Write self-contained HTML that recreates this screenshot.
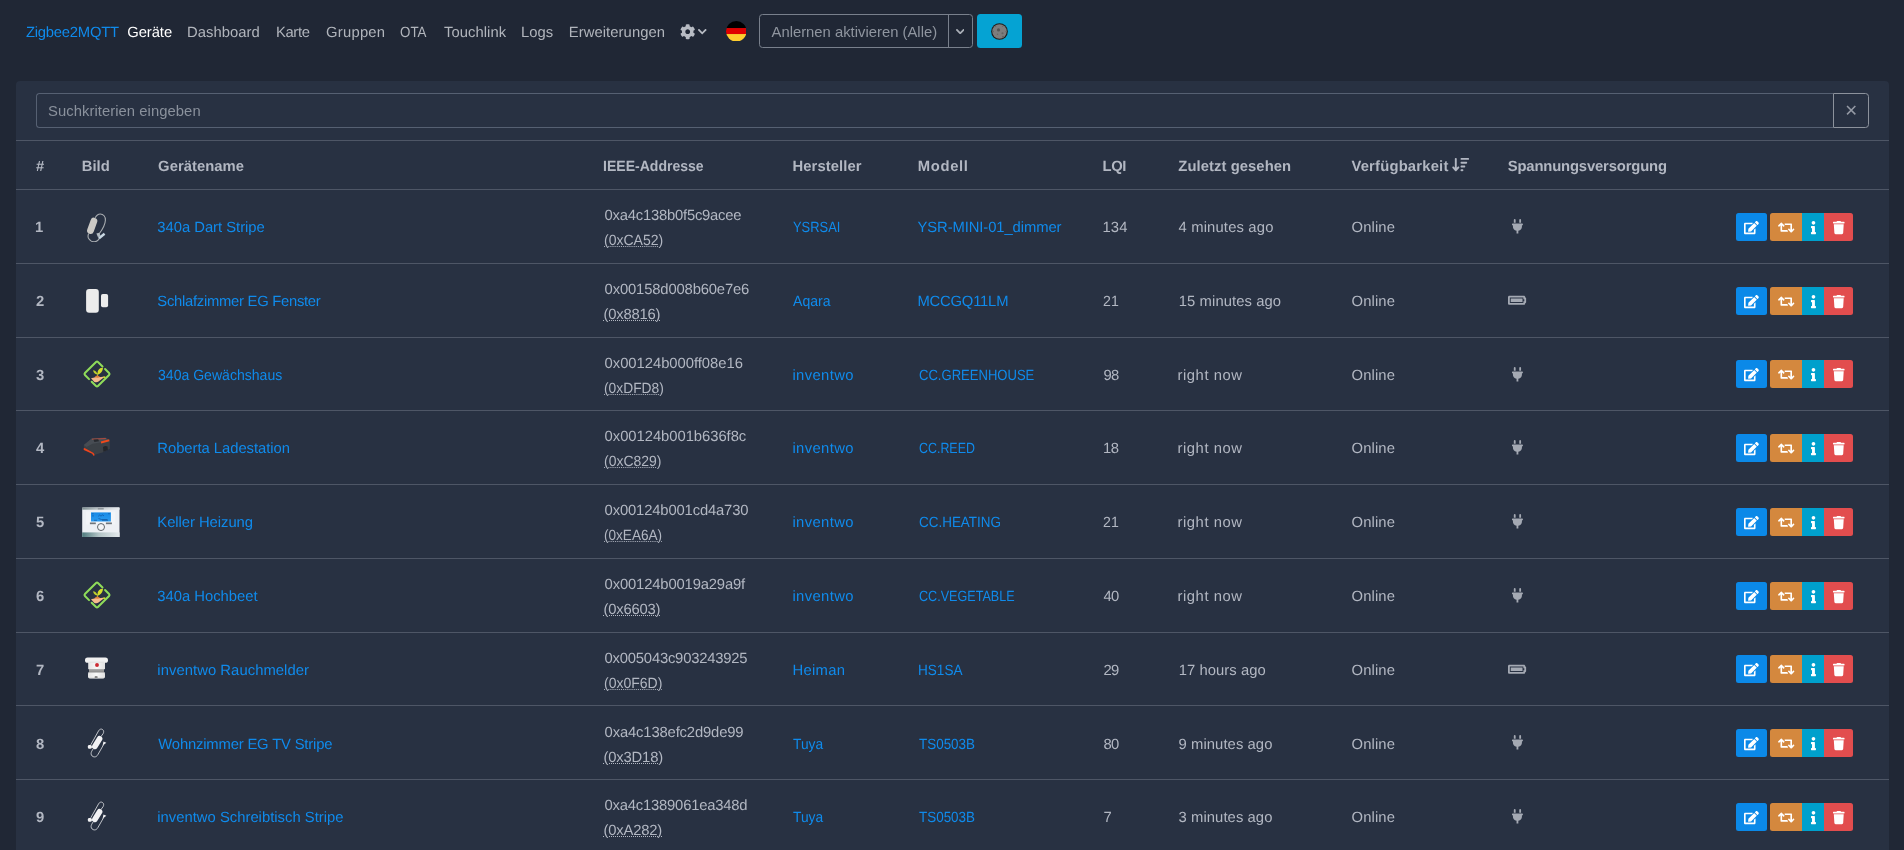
<!DOCTYPE html>
<html lang="de">
<head>
<meta charset="utf-8">
<title>Zigbee2MQTT</title>
<meta name="viewport" content="width=device-width, initial-scale=1">
<style>
*{box-sizing:border-box}
html,body{margin:0;padding:0}
body{width:1904px;height:850px;overflow:hidden;background:#202735;color:#b2b7c2;font-family:"Liberation Sans",Arial,sans-serif;font-size:14.8px;line-height:21.6px;text-rendering:geometricPrecision}
a{text-decoration:none;color:inherit}
ul{list-style:none;margin:0;padding:0}
button{font:inherit;margin:0;padding:0;border:0;background:none;color:inherit;cursor:pointer}
.fa{display:inline-block;height:1em;width:auto;vertical-align:-.125em;overflow:visible}

/* ---------- navbar ---------- */
.navbar{will-change:transform;position:absolute;left:0;top:0;width:1904px;height:62px;display:flex;align-items:center;padding-left:26px}
.brand{display:block;color:#0f8bec;width:101.600px;white-space:nowrap;position:relative;top:3px}
.nav{display:flex;align-items:center}
.nav li{flex:none}
.nl{display:block;color:#b1b5bc;padding:7px 0;white-space:nowrap;position:relative;top:3px}
.nl.active{color:#fff}
.w-geraete{width:60.400px}.w-dash{width:88.500px}.w-karte{width:50px}.w-grp{width:74.100px}.w-ota{width:42.900px}.w-touch{width:78.500px}.w-logs{width:47.400px}.w-erw{width:110.600px}.w-cog{width:45.900px}.w-flag{width:33.100px}
.n-cog{display:flex;align-items:center;color:#b8bcc4;top:.5px}
.cog{height:15.400px;width:15.400px}
.chev{width:8.400px;height:5.500px;margin-left:2.800px;margin-top:1px}
.n-flag{padding:0;display:flex;top:0}
.flag{width:20.600px;height:20.600px;display:block}
.join{display:flex;flex:none;width:214px;height:34px;border:1px solid #79808c;border-radius:3.500px;color:#8f959f}
.join-main{padding:0 0 0 11.300px;border-right:1px solid #79808c;width:188.700px;text-align:left;white-space:nowrap;position:relative}
.join-main .t{position:relative;top:2px}
.join-dd{flex:1;display:flex;align-items:center;justify-content:center;color:#a9aeb6}
.chev2{width:8.400px;height:5.500px;margin-top:1px}
.moon{flex:none;margin-left:4px;width:45px;height:34px;border-radius:3.500px;background:#05a3d3;display:flex;align-items:center;justify-content:center}
.moon svg{width:17px;height:17px;margin-top:1px}

/* ---------- card ---------- */
.card{will-change:transform;position:absolute;left:16px;top:81px;width:1873px;height:800px;background:#283142;border-radius:4px 4px 0 0}
.search{position:absolute;left:20px;top:12px;width:1833px;height:35px;display:flex}
.q{flex:1;height:35px;border:1px solid #566072;border-right:0;border-radius:3.500px 0 0 3.500px;background:transparent;color:#b2b7c2;font:inherit;padding:0 11px;outline:0;min-width:0}
.q::placeholder{color:#8a919c;opacity:1;letter-spacing:.06px}
.clr{width:36px;height:35px;border:1px solid #8c929c;border-radius:0 3.500px 3.500px 0;color:#959aa5;display:flex;align-items:center;justify-content:center}
.clr svg{width:10.400px;height:10.400px}

.tbl{position:absolute;left:0;top:59px;width:1873px;table-layout:fixed;border-collapse:collapse;border-spacing:0}
.tbl th,.tbl td{padding:2px 0 0 20px;text-align:left;vertical-align:middle;border-bottom:1px solid #4e5666;white-space:nowrap}
.tbl thead tr{height:49px}
.tbl th{border-top:1px solid #4e5666;font-weight:700;color:#b2b7c2;padding-top:5.200px}
.lnk{color:#0f8bec}
.tbl td .t{position:relative;top:1px}
.tbl tr.lo td .t{top:2px}
.tbl tr.lo .pic{top:0}
.c-num b{font-weight:700}
.pic{display:flex;align-items:center;margin-top:-2px;height:30px;position:relative;top:-.5px}
.pic-dart{top:.2px}.pic-thermo{top:.2px}
.pic svg{display:block;flex:none}
.ieee{line-height:25px}
.nwk{line-height:25px}
abbr{text-decoration:underline dotted #b2b7c2 1px;text-underline-offset:.8px;cursor:help}
.sorti{height:15.200px;margin-left:3.800px;position:relative;top:-.1px}
.pw-plug{height:14.500px;margin-left:4px;color:#a4a9b3;position:relative;top:1px}
.pw-bat{height:14.500px;color:#a4a9b3;position:relative;top:1px}
.acts{display:flex;align-items:center;height:28px;margin-top:-2px}
.btn{height:28px;color:#fff;display:flex;align-items:center;justify-content:center}
.btn .fa{height:13.200px;position:relative;top:.7px}
.b-edit{width:31px;background:#0b89e8;border-radius:2.500px;margin-right:3px}
.grp{display:flex}
.b-warn{width:32px;background:#d4883e;border-radius:2.500px 0 0 2.500px}
.b-info{width:22px;background:#00a0cc}
.b-del{width:29px;background:#e24d4e;border-radius:0 2.500px 2.500px 0}

</style>
</head>
<body>
<nav class="navbar">
<a class="brand" href="#"><span class="t" style="letter-spacing:-0.23px">Zigbee2MQTT</span></a>
<ul class="nav">
<li class="w-geraete"><a class="nl active n-geraete" href="#"><span class="t" style="letter-spacing:-0.06px;margin-left:-0.4px">Geräte</span></a></li>
<li class="w-dash"><a class="nl n-dash" href="#"><span class="t" style="letter-spacing:0.03px;margin-left:-1.0px">Dashboard</span></a></li>
<li class="w-karte"><a class="nl n-karte" href="#"><span class="t" style="letter-spacing:-0.37px;margin-left:-0.5px">Karte</span></a></li>
<li class="w-grp"><a class="nl n-grp" href="#"><span class="t" style="letter-spacing:0.25px;margin-left:-0.5px">Gruppen</span></a></li>
<li class="w-ota"><a class="nl n-ota" href="#"><span class="t" style="margin-left:-0.4px;display:inline-block;transform-origin:0 50%;transform:scaleX(0.903)">OTA</span></a></li>
<li class="w-touch"><a class="nl n-touch" href="#"><span class="t" style="letter-spacing:0.06px;margin-left:0.5px">Touchlink</span></a></li>
<li class="w-logs"><a class="nl n-logs" href="#"><span class="t" style="margin-left:-1.0px">Logs</span></a></li>
<li class="w-erw"><a class="nl n-erw" href="#"><span class="t" style="letter-spacing:0.07px;margin-left:-0.6px">Erweiterungen</span></a></li>
<li class="w-cog"><a class="nl n-cog" href="#"><svg class="fa cog" viewBox="0 0 512 512" aria-hidden="true"><path fill="currentColor" d="M487.4 315.7l-42.6-24.6c4.3-23.2 4.3-47 0-70.2l42.6-24.6c4.9-2.8 7.1-8.6 5.500-14-11.100-35.600-30-67.800-54.700-94.600-3.800-4.100-10-5.100-14.800-2.300L380.800 110c-17.900-15.400-38.500-27.300-60.800-35.100V25.800c0-5.600-3.900-10.500-9.400-11.700-36.700-8.200-74.300-7.800-109.200 0-5.500 1.200-9.400 6.100-9.400 11.700V75c-22.200 7.900-42.800 19.800-60.800 35.100L88.700 85.500c-4.900-2.800-11-1.900-14.800 2.300-24.700 26.700-43.600 58.900-54.700 94.600-1.700 5.400.6 11.200 5.500 14L67.300 221c-4.300 23.200-4.300 47 0 70.200l-42.600 24.600c-4.900 2.800-7.100 8.600-5.500 14 11.100 35.600 30 67.800 54.700 94.600 3.800 4.100 10 5.100 14.800 2.300l42.600-24.600c17.900 15.400 38.500 27.300 60.800 35.100v49.200c0 5.600 3.900 10.500 9.400 11.700 36.700 8.200 74.300 7.800 109.200 0 5.500-1.200 9.400-6.100 9.400-11.700v-49.200c22.200-7.900 42.800-19.800 60.800-35.100l42.600 24.600c4.900 2.800 11 1.900 14.800-2.300 24.700-26.700 43.600-58.900 54.700-94.600 1.500-5.500-.7-11.300-5.600-14.100zM256 336c-44.100 0-80-35.900-80-80s35.900-80 80-80 80 35.900 80 80-35.900 80-80 80z"/></svg><svg class="chev" viewBox="0 0 8.400 5.500" aria-hidden="true"><path d="M.9 1l3.300 3.300 3.300-3.300" fill="none" stroke="currentColor" stroke-width="1.800" stroke-linecap="square" stroke-linejoin="miter"/></svg></a></li>
<li class="w-flag"><a class="nl n-flag" href="#"><svg class="flag" viewBox="0 0 21 21" aria-hidden="true"><defs><clipPath id="fc"><circle cx="10.5" cy="10.500" r="10.500"/></clipPath></defs><g clip-path="url(#fc)"><rect width="21" height="7.2" fill="#000"/><rect y="7.2" width="21" height="6.100" fill="#e00000"/><rect y="13.300" width="21" height="7.700" fill="#ffcd2e"/></g></svg></a></li>
</ul>
<div class="join">
<button class="join-main" type="button"><span class="t" style="letter-spacing:0.01px;margin-left:0.3px">Anlernen aktivieren (Alle)</span></button><button class="join-dd" type="button"><svg class="chev2" viewBox="0 0 8.400 5.500" aria-hidden="true"><path d="M.9 1l3.300 3.300 3.300-3.300" fill="none" stroke="currentColor" stroke-width="1.800" stroke-linecap="square" stroke-linejoin="miter"/></svg></button>
</div>
<button class="moon" type="button"><svg viewBox="-8.500 -8.500 17 17" aria-hidden="true"><circle r="8.350" fill="#211c1a"/><circle r="7.250" fill="#7d7d7d"/><g fill="#555"><circle cx="-1" cy="-1.600" r="1.550"/><circle cx="3" cy="1.800" r="1.050" fill="#626262"/><circle cx="-2" cy="2.800" r=".75" fill="#666"/><circle cx="3.500" cy="5.300" r="1" fill="#606060"/><circle cx="-6.300" cy=".1" r=".8" fill="#666"/><circle cx="-3.900" cy="-5.100" r=".7" fill="#6a6a6a"/><circle cx="3.100" cy="-5.100" r=".7" fill="#6a6a6a"/><circle cx="6.400" cy=".1" r=".7" fill="#6a6a6a"/></g></svg></button>
</nav>
<main class="card">
<div class="search">
<input class="q" type="text" placeholder="Suchkriterien eingeben"><button class="clr" type="button"><svg viewBox="0 0 10 10" aria-hidden="true"><path d="M1 1l8 8M9 1l-8 8" stroke="currentColor" stroke-width="1.450" fill="none"/></svg></button>
</div>
<table class="tbl">
<colgroup><col style="width:46px"><col style="width:76px"><col style="width:446px"><col style="width:189px"><col style="width:125px"><col style="width:185px"><col style="width:75px"><col style="width:173px"><col style="width:157px"><col style="width:228px"><col style="width:173px"></colgroup>
<thead>
<tr>
<th><span class="t" style="margin-left:0.1px">#</span></th><th><span class="t" style="letter-spacing:0.03px;margin-left:-0.3px">Bild</span></th><th><span class="t" style="letter-spacing:0.03px;margin-left:0.1px">Gerätename</span></th><th><span class="t" style="margin-left:-0.8px;display:inline-block;transform-origin:0 50%;transform:scaleX(0.949)">IEEE-Addresse</span></th><th><span class="t" style="letter-spacing:0.10px;margin-left:-0.6px">Hersteller</span></th><th><span class="t" style="letter-spacing:0.64px;margin-left:-0.2px">Modell</span></th><th><span class="t" style="letter-spacing:-0.30px;margin-left:-0.6px">LQI</span></th><th><span class="t" style="letter-spacing:0.07px;margin-left:0.3px">Zuletzt gesehen</span></th><th><span class="t" style="letter-spacing:0.20px;margin-left:0.4px">Verfügbarkeit</span><svg class="fa sorti" viewBox="0 0 576 512" aria-hidden="true"><path fill="currentColor" d="M151.6 469.6C145.5 476.2 137 480 128 480s-17.5-3.8-23.6-10.4l-88-96c-11.900-13-11.100-33.300 2-45.200s33.300-11.100 45.200 2L96 365.700V64c0-17.700 14.300-32 32-32s32 14.300 32 32V365.700l32.400-35.400c11.900-13 32.200-13.900 45.200-2s13.900 32.200 2 45.200l-88 96zM320 480c-17.700 0-32-14.300-32-32s14.300-32 32-32h32c17.700 0 32 14.300 32 32s-14.300 32-32 32H320zm0-128c-17.700 0-32-14.300-32-32s14.300-32 32-32h96c17.700 0 32 14.300 32 32s-14.300 32-32 32H320zm0-128c-17.700 0-32-14.300-32-32s14.300-32 32-32H480c17.700 0 32 14.300 32 32s-14.300 32-32 32H320zm0-128c-17.700 0-32-14.300-32-32s14.300-32 32-32H544c17.700 0 32 14.300 32 32s-14.300 32-32 32H320z"/></svg></th><th><span class="t" style="letter-spacing:-0.15px;margin-left:-0.3px">Spannungsversorgung</span></th><th></th>
</tr>
</thead>
<tbody>
<tr style="height:74px">
<td class="c-num"><b class="t" style="margin-left:-1.0px">1</b></td>
<td class="c-img"><div class="pic pic-dart"><svg viewBox="0 0 30 30" width="30" height="30" aria-hidden="true"><path d="M13.200 5.800C14.500 3.300 16.300 2 18.200 2c3.200 0 5.400 2.600 5.200 6.200-.1 2.300-.8 4.200-1.700 6.200-1 2.200-2.600 4.800-4.700 7.600" fill="none" stroke="#a9adb1" stroke-width="1.100"/><path d="M6.700 21.500c-.9 2-.9 3.800.1 5.300 1.200 1.900 3.200 3 5.300 3 1.700 0 3.200-.7 4.200-1.900.6-.7.900-1.400 1-2.300" fill="none" stroke="#a9adb1" stroke-width="1.100"/><rect x="-3.400" y="-8.400" width="6.800" height="16.800" rx="3.400" transform="translate(10.200 13.800) rotate(20)" fill="#cbc9c5"/><path d="M14.400 21.600l2.800-.9 1.300 2.700-2.500 1.800z" fill="#b4bcc2"/><path d="M16.200 25.200l5.600-4.400 1.500 1.900-5.500 4.500z" fill="#c9d8e3"/></svg></div></td>
<td class="c-name"><a class="lnk t" href="#" style="letter-spacing:-0.02px;margin-left:-0.7px">340a Dart Stripe</a></td>
<td class="c-ieee"><div class="ieee"><span class="t" style="letter-spacing:-0.22px;margin-left:0.6px">0xa4c138b0f5c9acee</span></div><div class="nwk"><abbr class="t" title="Netzwerkadresse" style="margin-left:0.4px;display:inline-block;transform-origin:0 50%;transform:scaleX(0.948)">(0xCA52)</abbr></div></td>
<td class="c-vendor"><a class="lnk t" href="#" style="margin-left:0.4px;display:inline-block;transform-origin:0 50%;transform:scaleX(0.872)">YSRSAI</a></td>
<td class="c-model"><a class="lnk t" href="#" style="letter-spacing:-0.09px;margin-left:-0.5px">YSR-MINI-01_dimmer</a></td>
<td class="c-lqi"><span class="t" style="letter-spacing:0.20px;margin-left:-0.6px">134</span></td>
<td class="c-seen"><span class="t" style="letter-spacing:0.16px;margin-left:0.5px">4 minutes ago</span></td>
<td class="c-avail"><span class="t" style="letter-spacing:0.12px;margin-left:0.5px">Online</span></td>
<td class="c-power"><svg class="fa pw-plug" viewBox="0 0 384 512" aria-hidden="true"><path fill="currentColor" d="M320 32a32 32 0 0 0-64 0v96h64zm48 128H16a16 16 0 0 0-16 16v32a16 16 0 0 0 16 16h16v32a160.07 160.07 0 0 0 128 156.8V512h64v-99.2A160.07 160.07 0 0 0 352 256v-32h16a16 16 0 0 0 16-16v-32a16 16 0 0 0-16-16zm-240-128a32 32 0 0 0-64 0v96h64z"/></svg></td>
<td class="c-act"><div class="acts"><button class="btn b-edit" type="button"><svg class="fa " viewBox="0 0 576 512" aria-hidden="true"><path fill="currentColor" d="M402.6 83.2l90.2 90.2c3.8 3.8 3.8 10 0 13.8L274.4 405.6l-92.8 10.3c-12.4 1.4-22.9-9.1-21.5-21.5l10.3-92.8L388.8 83.2c3.8-3.8 10-3.8 13.8 0zm162-22.9l-48.8-48.8c-15.2-15.2-39.9-15.2-55.2 0l-35.4 35.4c-3.8 3.8-3.8 10 0 13.8l90.2 90.2c3.8 3.8 10 3.8 13.8 0l35.4-35.4c15.2-15.3 15.2-40 0-55.2zM384 346.2V448H64V128h229.8c3.2 0 6.2-1.3 8.5-3.5l40-40c7.6-7.6 2.2-20.5-8.5-20.5H48C21.5 64 0 85.5 0 112v352c0 26.5 21.5 48 48 48h352c26.5 0 48-21.5 48-48V306.200c0-10.700-12.900-16-20.500-8.500l-40 40c-2.200 2.300-3.500 5.300-3.500 8.500z"/></svg></button><div class="grp"><button class="btn b-warn" type="button"><svg class="fa " viewBox="0 0 640 512" aria-hidden="true"><path fill="currentColor" d="M629.657 343.598L528.971 444.284c-9.373 9.372-24.568 9.372-33.941 0L394.343 343.598c-9.373-9.373-9.373-24.569 0-33.941l10.823-10.823c9.562-9.562 25.133-9.34 34.419.492L480 342.118V160H292.451a24.005 24.005 0 0 1-16.971-7.029l-16-16C244.361 121.851 255.069 96 276.451 96H520c13.255 0 24 10.745 24 24v222.118l40.416-42.792c9.285-9.831 24.856-10.054 34.419-.492l10.823 10.823c9.372 9.372 9.372 24.569-.001 33.941zm-265.138 15.431A23.999 23.999 0 0 0 347.548 352H160V169.881l40.416 42.792c9.286 9.831 24.856 10.054 34.419.491l10.822-10.822c9.373-9.373 9.373-24.569 0-33.941L144.971 67.716c-9.373-9.373-24.569-9.373-33.941 0L10.343 168.402c-9.373 9.373-9.373 24.569 0 33.941l10.822 10.822c9.562 9.562 25.133 9.34 34.419-.491L96 169.881V392c0 13.255 10.745 24 24 24h243.549c21.382 0 32.09-25.851 16.971-40.971l-16.001-16z"/></svg></button><button class="btn b-info" type="button"><svg class="fa " viewBox="0 0 192 512" aria-hidden="true"><path fill="currentColor" d="M20 424.229h20V279.771H20c-11.046 0-20-8.954-20-20V212c0-11.046 8.954-20 20-20h112c11.046 0 20 8.954 20 20v212.229h20c11.046 0 20 8.954 20 20V492c0 11.046-8.954 20-20 20H20c-11.046 0-20-8.954-20-20v-47.771c0-11.046 8.954-20 20-20zM96 0C56.235 0 24 32.235 24 72s32.235 72 72 72 72-32.235 72-72S135.764 0 96 0z"/></svg></button><button class="btn b-del" type="button"><svg class="fa " viewBox="0 0 448 512" aria-hidden="true"><path fill="currentColor" d="M432 32H312l-9.4-18.7A24 24 0 0 0 281.1 0H166.8a23.72 23.72 0 0 0-21.4 13.3L136 32H16A16 16 0 0 0 0 48v32a16 16 0 0 0 16 16h416a16 16 0 0 0 16-16V48a16 16 0 0 0-16-16zM53.2 467a48 48 0 0 0 47.9 45h245.8a48 48 0 0 0 47.9-45L416 128H32z"/></svg></button></div></div></td>
</tr>
<tr style="height:74px">
<td class="c-num"><b class="t">2</b></td>
<td class="c-img"><div class="pic pic-door"><svg viewBox="0 0 30 30" width="30" height="30" aria-hidden="true"><rect x="4.100" y="3.900" width="12.700" height="23.900" rx="3" fill="#ececec"/><rect x="19" y="8.900" width="7.100" height="13.300" rx="1.800" fill="#ececec"/></svg></div></td>
<td class="c-name"><a class="lnk t" href="#" style="letter-spacing:-0.27px;margin-left:-0.7px">Schlafzimmer EG Fenster</a></td>
<td class="c-ieee"><div class="ieee"><span class="t" style="letter-spacing:-0.15px;margin-left:0.6px">0x00158d008b60e7e6</span></div><div class="nwk"><abbr class="t" title="Netzwerkadresse" style="letter-spacing:-0.19px;margin-left:-0.6px">(0x8816)</abbr></div></td>
<td class="c-vendor"><a class="lnk t" href="#" style="margin-left:0.4px;display:inline-block;transform-origin:0 50%;transform:scaleX(0.950)">Aqara</a></td>
<td class="c-model"><a class="lnk t" href="#" style="letter-spacing:-0.21px;margin-left:-0.5px">MCCGQ11LM</a></td>
<td class="c-lqi"><span class="t" style="margin-left:0.4px;display:inline-block;transform-origin:0 50%;transform:scaleX(0.957)">21</span></td>
<td class="c-seen"><span class="t" style="letter-spacing:0.08px;margin-left:0.8px">15 minutes ago</span></td>
<td class="c-avail"><span class="t" style="letter-spacing:0.12px;margin-left:0.5px">Online</span></td>
<td class="c-power"><svg class="fa pw-bat" viewBox="0 0 640 512" aria-hidden="true"><path fill="currentColor" d="M544 160v64h32v64h-32v64H64V160h480m16-64H48c-26.510 0-48 21.490-48 48v224c0 26.510 21.490 48 48 48h512c26.510 0 48-21.490 48-48v-16h8c13.255 0 24-10.745 24-24V184c0-13.255-10.745-24-24-24h-8v-16c0-26.510-21.490-48-48-48zm-48 96H96v128h416V192z"/></svg></td>
<td class="c-act"><div class="acts"><button class="btn b-edit" type="button"><svg class="fa " viewBox="0 0 576 512" aria-hidden="true"><path fill="currentColor" d="M402.6 83.2l90.2 90.2c3.8 3.8 3.8 10 0 13.8L274.4 405.6l-92.8 10.3c-12.4 1.4-22.9-9.1-21.5-21.5l10.3-92.8L388.8 83.2c3.8-3.8 10-3.8 13.8 0zm162-22.9l-48.8-48.8c-15.2-15.2-39.9-15.2-55.2 0l-35.4 35.4c-3.8 3.8-3.8 10 0 13.8l90.2 90.2c3.8 3.8 10 3.8 13.8 0l35.4-35.4c15.2-15.3 15.2-40 0-55.2zM384 346.2V448H64V128h229.8c3.2 0 6.2-1.3 8.5-3.5l40-40c7.6-7.6 2.2-20.5-8.5-20.5H48C21.5 64 0 85.5 0 112v352c0 26.5 21.5 48 48 48h352c26.5 0 48-21.5 48-48V306.200c0-10.700-12.900-16-20.500-8.500l-40 40c-2.200 2.300-3.500 5.300-3.500 8.500z"/></svg></button><div class="grp"><button class="btn b-warn" type="button"><svg class="fa " viewBox="0 0 640 512" aria-hidden="true"><path fill="currentColor" d="M629.657 343.598L528.971 444.284c-9.373 9.372-24.568 9.372-33.941 0L394.343 343.598c-9.373-9.373-9.373-24.569 0-33.941l10.823-10.823c9.562-9.562 25.133-9.34 34.419.492L480 342.118V160H292.451a24.005 24.005 0 0 1-16.971-7.029l-16-16C244.361 121.851 255.069 96 276.451 96H520c13.255 0 24 10.745 24 24v222.118l40.416-42.792c9.285-9.831 24.856-10.054 34.419-.492l10.823 10.823c9.372 9.372 9.372 24.569-.001 33.941zm-265.138 15.431A23.999 23.999 0 0 0 347.548 352H160V169.881l40.416 42.792c9.286 9.831 24.856 10.054 34.419.491l10.822-10.822c9.373-9.373 9.373-24.569 0-33.941L144.971 67.716c-9.373-9.373-24.569-9.373-33.941 0L10.343 168.402c-9.373 9.373-9.373 24.569 0 33.941l10.822 10.822c9.562 9.562 25.133 9.34 34.419-.491L96 169.881V392c0 13.255 10.745 24 24 24h243.549c21.382 0 32.09-25.851 16.971-40.971l-16.001-16z"/></svg></button><button class="btn b-info" type="button"><svg class="fa " viewBox="0 0 192 512" aria-hidden="true"><path fill="currentColor" d="M20 424.229h20V279.771H20c-11.046 0-20-8.954-20-20V212c0-11.046 8.954-20 20-20h112c11.046 0 20 8.954 20 20v212.229h20c11.046 0 20 8.954 20 20V492c0 11.046-8.954 20-20 20H20c-11.046 0-20-8.954-20-20v-47.771c0-11.046 8.954-20 20-20zM96 0C56.235 0 24 32.235 24 72s32.235 72 72 72 72-32.235 72-72S135.764 0 96 0z"/></svg></button><button class="btn b-del" type="button"><svg class="fa " viewBox="0 0 448 512" aria-hidden="true"><path fill="currentColor" d="M432 32H312l-9.4-18.7A24 24 0 0 0 281.1 0H166.8a23.72 23.72 0 0 0-21.4 13.3L136 32H16A16 16 0 0 0 0 48v32a16 16 0 0 0 16 16h416a16 16 0 0 0 16-16V48a16 16 0 0 0-16-16zM53.2 467a48 48 0 0 0 47.9 45h245.8a48 48 0 0 0 47.9-45L416 128H32z"/></svg></button></div></div></td>
</tr>
<tr class="lo" style="height:73px">
<td class="c-num"><b class="t">3</b></td>
<td class="c-img"><div class="pic pic-plant"><svg viewBox="0 0 30 30" width="30" height="30" aria-hidden="true"><g fill="none" stroke="#8fdc5a" stroke-width="1.900" stroke-linecap="round" stroke-linejoin="round" transform="translate(15 15) scale(1.060) translate(-15 -15)"><path d="M7.500 19.800L3.600 15.900a1.300 1.300 0 0 1 0-1.800L14.100 3.600a1.300 1.300 0 0 1 1.800 0l4.300 4.300"/><path d="M22.600 10.300l3.800 3.800a1.300 1.300 0 0 1 0 1.800L15.900 26.400a1.300 1.300 0 0 1-1.800 0L10 22.300"/></g><path d="M15.700 15.800c-.5-2.300 0-4.300 1.500-5.800 1.100-1.100 2.400-1.500 3.800-1.300-.1 2-.8 3.700-2.100 5-1 1-2.100 1.800-3.200 2.100z" fill="#d3dc2b"/><path d="M15.400 15.500c-.2-1.500-.9-2.700-2.100-3.500-.7-.5-1.400-.7-2.200-.8.200 1.500.9 2.700 2 3.500.7.500 1.500.8 2.300.8z" fill="#c0cf2e"/><path d="M15.500 14v3" stroke="#a9bf2c" stroke-width=".9"/><path d="M12 18.600c1-.9 2-1.900 3.400-2.400 1.200.5 2.300 1.300 3.400 2.600l-3 .9z" fill="#e07c3c"/><path d="M9 19.300c2.200-.9 4.300-1.100 6.400-.6l5-1c1.100-.1 1.500.7.700 1.400l-4.600 3.500c-1.200.8-2.600.8-4.100.3z" fill="#f6bb8d"/><ellipse cx="22.200" cy="18.200" rx="1.400" ry="1" fill="#c9d530"/></svg></div></td>
<td class="c-name"><a class="lnk t" href="#" style="margin-left:0.3px;display:inline-block;transform-origin:0 50%;transform:scaleX(0.950)">340a Gewächshaus</a></td>
<td class="c-ieee"><div class="ieee"><span class="t" style="letter-spacing:-0.03px;margin-left:0.6px">0x00124b000ff08e16</span></div><div class="nwk"><abbr class="t" title="Netzwerkadresse" style="margin-left:0.4px;display:inline-block;transform-origin:0 50%;transform:scaleX(0.933)">(0xDFD8)</abbr></div></td>
<td class="c-vendor"><a class="lnk t" href="#" style="letter-spacing:0.38px;margin-left:-0.6px">inventwo</a></td>
<td class="c-model"><a class="lnk t" href="#" style="margin-left:0.5px;display:inline-block;transform-origin:0 50%;transform:scaleX(0.882)">CC.GREENHOUSE</a></td>
<td class="c-lqi"><span class="t" style="letter-spacing:-0.60px;margin-left:0.4px">98</span></td>
<td class="c-seen"><span class="t" style="letter-spacing:0.56px;margin-left:-0.5px">right now</span></td>
<td class="c-avail"><span class="t" style="letter-spacing:0.12px;margin-left:0.5px">Online</span></td>
<td class="c-power"><svg class="fa pw-plug" viewBox="0 0 384 512" aria-hidden="true"><path fill="currentColor" d="M320 32a32 32 0 0 0-64 0v96h64zm48 128H16a16 16 0 0 0-16 16v32a16 16 0 0 0 16 16h16v32a160.07 160.07 0 0 0 128 156.8V512h64v-99.2A160.07 160.07 0 0 0 352 256v-32h16a16 16 0 0 0 16-16v-32a16 16 0 0 0-16-16zm-240-128a32 32 0 0 0-64 0v96h64z"/></svg></td>
<td class="c-act"><div class="acts"><button class="btn b-edit" type="button"><svg class="fa " viewBox="0 0 576 512" aria-hidden="true"><path fill="currentColor" d="M402.6 83.2l90.2 90.2c3.8 3.8 3.8 10 0 13.8L274.4 405.6l-92.8 10.3c-12.4 1.4-22.9-9.1-21.5-21.5l10.3-92.8L388.8 83.2c3.8-3.8 10-3.8 13.8 0zm162-22.9l-48.8-48.8c-15.2-15.2-39.9-15.2-55.2 0l-35.4 35.4c-3.8 3.8-3.8 10 0 13.8l90.2 90.2c3.8 3.8 10 3.8 13.8 0l35.4-35.4c15.2-15.3 15.2-40 0-55.2zM384 346.2V448H64V128h229.8c3.2 0 6.2-1.3 8.5-3.5l40-40c7.6-7.6 2.2-20.5-8.5-20.5H48C21.5 64 0 85.5 0 112v352c0 26.5 21.5 48 48 48h352c26.5 0 48-21.5 48-48V306.200c0-10.700-12.900-16-20.500-8.500l-40 40c-2.200 2.300-3.500 5.300-3.500 8.500z"/></svg></button><div class="grp"><button class="btn b-warn" type="button"><svg class="fa " viewBox="0 0 640 512" aria-hidden="true"><path fill="currentColor" d="M629.657 343.598L528.971 444.284c-9.373 9.372-24.568 9.372-33.941 0L394.343 343.598c-9.373-9.373-9.373-24.569 0-33.941l10.823-10.823c9.562-9.562 25.133-9.34 34.419.492L480 342.118V160H292.451a24.005 24.005 0 0 1-16.971-7.029l-16-16C244.361 121.851 255.069 96 276.451 96H520c13.255 0 24 10.745 24 24v222.118l40.416-42.792c9.285-9.831 24.856-10.054 34.419-.492l10.823 10.823c9.372 9.372 9.372 24.569-.001 33.941zm-265.138 15.431A23.999 23.999 0 0 0 347.548 352H160V169.881l40.416 42.792c9.286 9.831 24.856 10.054 34.419.491l10.822-10.822c9.373-9.373 9.373-24.569 0-33.941L144.971 67.716c-9.373-9.373-24.569-9.373-33.941 0L10.343 168.402c-9.373 9.373-9.373 24.569 0 33.941l10.822 10.822c9.562 9.562 25.133 9.34 34.419-.491L96 169.881V392c0 13.255 10.745 24 24 24h243.549c21.382 0 32.09-25.851 16.971-40.971l-16.001-16z"/></svg></button><button class="btn b-info" type="button"><svg class="fa " viewBox="0 0 192 512" aria-hidden="true"><path fill="currentColor" d="M20 424.229h20V279.771H20c-11.046 0-20-8.954-20-20V212c0-11.046 8.954-20 20-20h112c11.046 0 20 8.954 20 20v212.229h20c11.046 0 20 8.954 20 20V492c0 11.046-8.954 20-20 20H20c-11.046 0-20-8.954-20-20v-47.771c0-11.046 8.954-20 20-20zM96 0C56.235 0 24 32.235 24 72s32.235 72 72 72 72-32.235 72-72S135.764 0 96 0z"/></svg></button><button class="btn b-del" type="button"><svg class="fa " viewBox="0 0 448 512" aria-hidden="true"><path fill="currentColor" d="M432 32H312l-9.4-18.7A24 24 0 0 0 281.1 0H166.8a23.72 23.72 0 0 0-21.4 13.3L136 32H16A16 16 0 0 0 0 48v32a16 16 0 0 0 16 16h416a16 16 0 0 0 16-16V48a16 16 0 0 0-16-16zM53.2 467a48 48 0 0 0 47.9 45h245.8a48 48 0 0 0 47.9-45L416 128H32z"/></svg></button></div></div></td>
</tr>
<tr style="height:74px">
<td class="c-num"><b class="t">4</b></td>
<td class="c-img"><div class="pic pic-mower"><svg viewBox="0 0 30 30" width="30" height="30" aria-hidden="true"><path d="M1.800 13L10 6.200l13.600-.4 4.200 2.800v8.200l-7.400 3.600-7.600 2.400L2 16.800z" fill="#3b4046"/><path d="M10 6.200l13.600-.4 3 2-8.600 2.600-7.500 1.400-6 3.200-2.600-2z" fill="#474c53"/><path d="M9.800 6.700l13.800-.7.400.9-13.600.8z" fill="#b4493d"/><path d="M11.400 7.600l4.800-.4.800 2-4.600.8z" fill="#26292e"/><path d="M18.800 9.600l8.400-2.300.2 1.900-8.200 2.400z" fill="#f04a1c"/><path d="M1.600 16.400l1-.4 9 5 1.200 2.200-1.400.6-1.200-2-8.400-3.800z" fill="#f0441c"/><path d="M21 15c1.300-1.300 3.400-1.500 4.600-.4l.2 3.400-4.400 1.800z" fill="#23262b"/></svg></div></td>
<td class="c-name"><a class="lnk t" href="#" style="letter-spacing:-0.03px;margin-left:-0.7px">Roberta Ladestation</a></td>
<td class="c-ieee"><div class="ieee"><span class="t" style="letter-spacing:-0.04px;margin-left:0.6px">0x00124b001b636f8c</span></div><div class="nwk"><abbr class="t" title="Netzwerkadresse" style="margin-left:0.4px;display:inline-block;transform-origin:0 50%;transform:scaleX(0.944)">(0xC829)</abbr></div></td>
<td class="c-vendor"><a class="lnk t" href="#" style="letter-spacing:0.38px;margin-left:-0.6px">inventwo</a></td>
<td class="c-model"><a class="lnk t" href="#" style="margin-left:0.5px;display:inline-block;transform-origin:0 50%;transform:scaleX(0.839)">CC.REED</a></td>
<td class="c-lqi"><span class="t" style="letter-spacing:-0.40px">18</span></td>
<td class="c-seen"><span class="t" style="letter-spacing:0.56px;margin-left:-0.5px">right now</span></td>
<td class="c-avail"><span class="t" style="letter-spacing:0.12px;margin-left:0.5px">Online</span></td>
<td class="c-power"><svg class="fa pw-plug" viewBox="0 0 384 512" aria-hidden="true"><path fill="currentColor" d="M320 32a32 32 0 0 0-64 0v96h64zm48 128H16a16 16 0 0 0-16 16v32a16 16 0 0 0 16 16h16v32a160.07 160.07 0 0 0 128 156.8V512h64v-99.2A160.07 160.07 0 0 0 352 256v-32h16a16 16 0 0 0 16-16v-32a16 16 0 0 0-16-16zm-240-128a32 32 0 0 0-64 0v96h64z"/></svg></td>
<td class="c-act"><div class="acts"><button class="btn b-edit" type="button"><svg class="fa " viewBox="0 0 576 512" aria-hidden="true"><path fill="currentColor" d="M402.6 83.2l90.2 90.2c3.8 3.8 3.8 10 0 13.8L274.4 405.6l-92.8 10.3c-12.4 1.4-22.9-9.1-21.5-21.5l10.3-92.8L388.8 83.2c3.8-3.8 10-3.8 13.8 0zm162-22.9l-48.8-48.8c-15.2-15.2-39.9-15.2-55.2 0l-35.4 35.4c-3.8 3.8-3.8 10 0 13.8l90.2 90.2c3.8 3.8 10 3.8 13.8 0l35.4-35.4c15.2-15.3 15.2-40 0-55.2zM384 346.2V448H64V128h229.8c3.2 0 6.2-1.3 8.5-3.5l40-40c7.6-7.6 2.2-20.5-8.5-20.5H48C21.5 64 0 85.5 0 112v352c0 26.5 21.5 48 48 48h352c26.5 0 48-21.5 48-48V306.200c0-10.700-12.900-16-20.500-8.500l-40 40c-2.200 2.300-3.500 5.300-3.500 8.500z"/></svg></button><div class="grp"><button class="btn b-warn" type="button"><svg class="fa " viewBox="0 0 640 512" aria-hidden="true"><path fill="currentColor" d="M629.657 343.598L528.971 444.284c-9.373 9.372-24.568 9.372-33.941 0L394.343 343.598c-9.373-9.373-9.373-24.569 0-33.941l10.823-10.823c9.562-9.562 25.133-9.34 34.419.492L480 342.118V160H292.451a24.005 24.005 0 0 1-16.971-7.029l-16-16C244.361 121.851 255.069 96 276.451 96H520c13.255 0 24 10.745 24 24v222.118l40.416-42.792c9.285-9.831 24.856-10.054 34.419-.492l10.823 10.823c9.372 9.372 9.372 24.569-.001 33.941zm-265.138 15.431A23.999 23.999 0 0 0 347.548 352H160V169.881l40.416 42.792c9.286 9.831 24.856 10.054 34.419.491l10.822-10.822c9.373-9.373 9.373-24.569 0-33.941L144.971 67.716c-9.373-9.373-24.569-9.373-33.941 0L10.343 168.402c-9.373 9.373-9.373 24.569 0 33.941l10.822 10.822c9.562 9.562 25.133 9.34 34.419-.491L96 169.881V392c0 13.255 10.745 24 24 24h243.549c21.382 0 32.09-25.851 16.971-40.971l-16.001-16z"/></svg></button><button class="btn b-info" type="button"><svg class="fa " viewBox="0 0 192 512" aria-hidden="true"><path fill="currentColor" d="M20 424.229h20V279.771H20c-11.046 0-20-8.954-20-20V212c0-11.046 8.954-20 20-20h112c11.046 0 20 8.954 20 20v212.229h20c11.046 0 20 8.954 20 20V492c0 11.046-8.954 20-20 20H20c-11.046 0-20-8.954-20-20v-47.771c0-11.046 8.954-20 20-20zM96 0C56.235 0 24 32.235 24 72s32.235 72 72 72 72-32.235 72-72S135.764 0 96 0z"/></svg></button><button class="btn b-del" type="button"><svg class="fa " viewBox="0 0 448 512" aria-hidden="true"><path fill="currentColor" d="M432 32H312l-9.4-18.7A24 24 0 0 0 281.1 0H166.8a23.72 23.72 0 0 0-21.4 13.3L136 32H16A16 16 0 0 0 0 48v32a16 16 0 0 0 16 16h416a16 16 0 0 0 16-16V48a16 16 0 0 0-16-16zM53.2 467a48 48 0 0 0 47.9 45h245.8a48 48 0 0 0 47.9-45L416 128H32z"/></svg></button></div></div></td>
</tr>
<tr style="height:74px">
<td class="c-num"><b class="t">5</b></td>
<td class="c-img"><div class="pic pic-thermo"><svg viewBox="0 0 38 30" width="38" height="30" aria-hidden="true"><defs><linearGradient id="tg1" x1="0" x2="1"><stop offset="0" stop-color="#4f7b7e"/><stop offset=".45" stop-color="#b3c4c6"/><stop offset="1" stop-color="#e4e9ec"/></linearGradient><linearGradient id="tg2" x1="0" x2="1"><stop offset="0" stop-color="#7e8e91"/><stop offset=".5" stop-color="#c4cbcf"/><stop offset="1" stop-color="#e9edf0"/></linearGradient><linearGradient id="tg3" x1="0" x2="0" y1="0" y2="1"><stop offset="0" stop-color="#178ae6"/><stop offset="1" stop-color="#2b9bef"/></linearGradient></defs><rect x=".2" y=".4" width="37.300" height="29.900" rx=".6" fill="#edf0f4"/><rect x=".2" y=".4" width="37.300" height="2.300" fill="url(#tg2)"/><rect x="15.800" y=".9" width="5.900" height="1.600" fill="#8f979d"/><rect x="4" y="4.500" width="29.200" height="12.900" fill="#f2f4f7"/><rect x=".2" y="25.400" width="37.300" height="4.900" fill="url(#tg1)"/><rect x="9" y="5.400" width="19.900" height="9.100" fill="url(#tg3)"/><path d="M10.200 8.900h1.600M16.200 9.300l1.400-1.200 1.400 1 1.600-1.200 1.400 1M16.500 11.500l3 1h6M12 13.300h3M20 13.300h6M10.200 6.700h1.300M26.200 6.700h1.600" stroke="#0d4c94" stroke-width=".8" fill="none" opacity=".75"/><rect x="7.900" y="15.500" width="5.900" height="1.700" fill="#6e757b"/><rect x="23.900" y="15.500" width="6" height="1.700" fill="#6e757b"/><circle cx="19" cy="20.050" r="3.500" fill="#f3f5f7" stroke="#464b50" stroke-width=".85"/></svg></div></td>
<td class="c-name"><a class="lnk t" href="#" style="letter-spacing:-0.04px;margin-left:-0.7px">Keller Heizung</a></td>
<td class="c-ieee"><div class="ieee"><span class="t" style="letter-spacing:-0.15px;margin-left:0.6px">0x00124b001cd4a730</span></div><div class="nwk"><abbr class="t" title="Netzwerkadresse" style="margin-left:0.4px;display:inline-block;transform-origin:0 50%;transform:scaleX(0.918)">(0xEA6A)</abbr></div></td>
<td class="c-vendor"><a class="lnk t" href="#" style="letter-spacing:0.38px;margin-left:-0.6px">inventwo</a></td>
<td class="c-model"><a class="lnk t" href="#" style="margin-left:0.5px;display:inline-block;transform-origin:0 50%;transform:scaleX(0.909)">CC.HEATING</a></td>
<td class="c-lqi"><span class="t" style="margin-left:0.4px;display:inline-block;transform-origin:0 50%;transform:scaleX(0.957)">21</span></td>
<td class="c-seen"><span class="t" style="letter-spacing:0.56px;margin-left:-0.5px">right now</span></td>
<td class="c-avail"><span class="t" style="letter-spacing:0.12px;margin-left:0.5px">Online</span></td>
<td class="c-power"><svg class="fa pw-plug" viewBox="0 0 384 512" aria-hidden="true"><path fill="currentColor" d="M320 32a32 32 0 0 0-64 0v96h64zm48 128H16a16 16 0 0 0-16 16v32a16 16 0 0 0 16 16h16v32a160.07 160.07 0 0 0 128 156.8V512h64v-99.2A160.07 160.07 0 0 0 352 256v-32h16a16 16 0 0 0 16-16v-32a16 16 0 0 0-16-16zm-240-128a32 32 0 0 0-64 0v96h64z"/></svg></td>
<td class="c-act"><div class="acts"><button class="btn b-edit" type="button"><svg class="fa " viewBox="0 0 576 512" aria-hidden="true"><path fill="currentColor" d="M402.6 83.2l90.2 90.2c3.8 3.8 3.8 10 0 13.8L274.4 405.6l-92.8 10.3c-12.4 1.4-22.9-9.1-21.5-21.5l10.3-92.8L388.8 83.2c3.8-3.8 10-3.8 13.8 0zm162-22.9l-48.8-48.8c-15.2-15.2-39.9-15.2-55.2 0l-35.4 35.4c-3.8 3.8-3.8 10 0 13.8l90.2 90.2c3.8 3.8 10 3.8 13.8 0l35.4-35.4c15.2-15.3 15.2-40 0-55.2zM384 346.2V448H64V128h229.8c3.2 0 6.2-1.3 8.5-3.5l40-40c7.6-7.6 2.2-20.5-8.5-20.5H48C21.5 64 0 85.5 0 112v352c0 26.5 21.5 48 48 48h352c26.5 0 48-21.5 48-48V306.200c0-10.700-12.900-16-20.500-8.500l-40 40c-2.200 2.300-3.500 5.300-3.500 8.500z"/></svg></button><div class="grp"><button class="btn b-warn" type="button"><svg class="fa " viewBox="0 0 640 512" aria-hidden="true"><path fill="currentColor" d="M629.657 343.598L528.971 444.284c-9.373 9.372-24.568 9.372-33.941 0L394.343 343.598c-9.373-9.373-9.373-24.569 0-33.941l10.823-10.823c9.562-9.562 25.133-9.34 34.419.492L480 342.118V160H292.451a24.005 24.005 0 0 1-16.971-7.029l-16-16C244.361 121.851 255.069 96 276.451 96H520c13.255 0 24 10.745 24 24v222.118l40.416-42.792c9.285-9.831 24.856-10.054 34.419-.492l10.823 10.823c9.372 9.372 9.372 24.569-.001 33.941zm-265.138 15.431A23.999 23.999 0 0 0 347.548 352H160V169.881l40.416 42.792c9.286 9.831 24.856 10.054 34.419.491l10.822-10.822c9.373-9.373 9.373-24.569 0-33.941L144.971 67.716c-9.373-9.373-24.569-9.373-33.941 0L10.343 168.402c-9.373 9.373-9.373 24.569 0 33.941l10.822 10.822c9.562 9.562 25.133 9.34 34.419-.491L96 169.881V392c0 13.255 10.745 24 24 24h243.549c21.382 0 32.09-25.851 16.971-40.971l-16.001-16z"/></svg></button><button class="btn b-info" type="button"><svg class="fa " viewBox="0 0 192 512" aria-hidden="true"><path fill="currentColor" d="M20 424.229h20V279.771H20c-11.046 0-20-8.954-20-20V212c0-11.046 8.954-20 20-20h112c11.046 0 20 8.954 20 20v212.229h20c11.046 0 20 8.954 20 20V492c0 11.046-8.954 20-20 20H20c-11.046 0-20-8.954-20-20v-47.771c0-11.046 8.954-20 20-20zM96 0C56.235 0 24 32.235 24 72s32.235 72 72 72 72-32.235 72-72S135.764 0 96 0z"/></svg></button><button class="btn b-del" type="button"><svg class="fa " viewBox="0 0 448 512" aria-hidden="true"><path fill="currentColor" d="M432 32H312l-9.4-18.7A24 24 0 0 0 281.1 0H166.8a23.72 23.72 0 0 0-21.4 13.3L136 32H16A16 16 0 0 0 0 48v32a16 16 0 0 0 16 16h416a16 16 0 0 0 16-16V48a16 16 0 0 0-16-16zM53.2 467a48 48 0 0 0 47.9 45h245.8a48 48 0 0 0 47.9-45L416 128H32z"/></svg></button></div></div></td>
</tr>
<tr style="height:74px">
<td class="c-num"><b class="t">6</b></td>
<td class="c-img"><div class="pic pic-plant"><svg viewBox="0 0 30 30" width="30" height="30" aria-hidden="true"><g fill="none" stroke="#8fdc5a" stroke-width="1.900" stroke-linecap="round" stroke-linejoin="round" transform="translate(15 15) scale(1.060) translate(-15 -15)"><path d="M7.500 19.800L3.600 15.900a1.300 1.300 0 0 1 0-1.800L14.100 3.600a1.300 1.300 0 0 1 1.800 0l4.300 4.300"/><path d="M22.600 10.300l3.800 3.800a1.300 1.300 0 0 1 0 1.800L15.900 26.400a1.300 1.300 0 0 1-1.800 0L10 22.300"/></g><path d="M15.700 15.800c-.5-2.300 0-4.300 1.500-5.800 1.100-1.100 2.400-1.500 3.800-1.300-.1 2-.8 3.700-2.100 5-1 1-2.100 1.800-3.200 2.100z" fill="#d3dc2b"/><path d="M15.400 15.500c-.2-1.500-.9-2.700-2.100-3.500-.7-.5-1.400-.7-2.200-.8.200 1.500.9 2.700 2 3.500.7.500 1.500.8 2.300.8z" fill="#c0cf2e"/><path d="M15.500 14v3" stroke="#a9bf2c" stroke-width=".9"/><path d="M12 18.600c1-.9 2-1.900 3.400-2.400 1.200.5 2.300 1.300 3.400 2.600l-3 .9z" fill="#e07c3c"/><path d="M9 19.300c2.200-.9 4.300-1.100 6.400-.6l5-1c1.100-.1 1.500.7.700 1.400l-4.600 3.500c-1.200.8-2.600.8-4.100.3z" fill="#f6bb8d"/><ellipse cx="22.200" cy="18.200" rx="1.400" ry="1" fill="#c9d530"/></svg></div></td>
<td class="c-name"><a class="lnk t" href="#" style="letter-spacing:-0.01px;margin-left:-0.7px">340a Hochbeet</a></td>
<td class="c-ieee"><div class="ieee"><span class="t" style="letter-spacing:-0.15px;margin-left:0.6px">0x00124b0019a29a9f</span></div><div class="nwk"><abbr class="t" title="Netzwerkadresse" style="letter-spacing:-0.19px;margin-left:-0.6px">(0x6603)</abbr></div></td>
<td class="c-vendor"><a class="lnk t" href="#" style="letter-spacing:0.38px;margin-left:-0.6px">inventwo</a></td>
<td class="c-model"><a class="lnk t" href="#" style="margin-left:0.5px;display:inline-block;transform-origin:0 50%;transform:scaleX(0.851)">CC.VEGETABLE</a></td>
<td class="c-lqi"><span class="t" style="letter-spacing:-0.60px;margin-left:0.4px">40</span></td>
<td class="c-seen"><span class="t" style="letter-spacing:0.56px;margin-left:-0.5px">right now</span></td>
<td class="c-avail"><span class="t" style="letter-spacing:0.12px;margin-left:0.5px">Online</span></td>
<td class="c-power"><svg class="fa pw-plug" viewBox="0 0 384 512" aria-hidden="true"><path fill="currentColor" d="M320 32a32 32 0 0 0-64 0v96h64zm48 128H16a16 16 0 0 0-16 16v32a16 16 0 0 0 16 16h16v32a160.07 160.07 0 0 0 128 156.8V512h64v-99.2A160.07 160.07 0 0 0 352 256v-32h16a16 16 0 0 0 16-16v-32a16 16 0 0 0-16-16zm-240-128a32 32 0 0 0-64 0v96h64z"/></svg></td>
<td class="c-act"><div class="acts"><button class="btn b-edit" type="button"><svg class="fa " viewBox="0 0 576 512" aria-hidden="true"><path fill="currentColor" d="M402.6 83.2l90.2 90.2c3.8 3.8 3.8 10 0 13.8L274.4 405.6l-92.8 10.3c-12.4 1.4-22.9-9.1-21.5-21.5l10.3-92.8L388.8 83.2c3.8-3.8 10-3.8 13.8 0zm162-22.9l-48.8-48.8c-15.2-15.2-39.9-15.2-55.2 0l-35.4 35.4c-3.8 3.8-3.8 10 0 13.8l90.2 90.2c3.8 3.8 10 3.8 13.8 0l35.4-35.4c15.2-15.3 15.2-40 0-55.2zM384 346.2V448H64V128h229.8c3.2 0 6.2-1.3 8.5-3.5l40-40c7.6-7.6 2.2-20.5-8.5-20.5H48C21.5 64 0 85.5 0 112v352c0 26.5 21.5 48 48 48h352c26.5 0 48-21.5 48-48V306.200c0-10.700-12.900-16-20.500-8.500l-40 40c-2.200 2.300-3.500 5.300-3.500 8.500z"/></svg></button><div class="grp"><button class="btn b-warn" type="button"><svg class="fa " viewBox="0 0 640 512" aria-hidden="true"><path fill="currentColor" d="M629.657 343.598L528.971 444.284c-9.373 9.372-24.568 9.372-33.941 0L394.343 343.598c-9.373-9.373-9.373-24.569 0-33.941l10.823-10.823c9.562-9.562 25.133-9.34 34.419.492L480 342.118V160H292.451a24.005 24.005 0 0 1-16.971-7.029l-16-16C244.361 121.851 255.069 96 276.451 96H520c13.255 0 24 10.745 24 24v222.118l40.416-42.792c9.285-9.831 24.856-10.054 34.419-.492l10.823 10.823c9.372 9.372 9.372 24.569-.001 33.941zm-265.138 15.431A23.999 23.999 0 0 0 347.548 352H160V169.881l40.416 42.792c9.286 9.831 24.856 10.054 34.419.491l10.822-10.822c9.373-9.373 9.373-24.569 0-33.941L144.971 67.716c-9.373-9.373-24.569-9.373-33.941 0L10.343 168.402c-9.373 9.373-9.373 24.569 0 33.941l10.822 10.822c9.562 9.562 25.133 9.34 34.419-.491L96 169.881V392c0 13.255 10.745 24 24 24h243.549c21.382 0 32.09-25.851 16.971-40.971l-16.001-16z"/></svg></button><button class="btn b-info" type="button"><svg class="fa " viewBox="0 0 192 512" aria-hidden="true"><path fill="currentColor" d="M20 424.229h20V279.771H20c-11.046 0-20-8.954-20-20V212c0-11.046 8.954-20 20-20h112c11.046 0 20 8.954 20 20v212.229h20c11.046 0 20 8.954 20 20V492c0 11.046-8.954 20-20 20H20c-11.046 0-20-8.954-20-20v-47.771c0-11.046 8.954-20 20-20zM96 0C56.235 0 24 32.235 24 72s32.235 72 72 72 72-32.235 72-72S135.764 0 96 0z"/></svg></button><button class="btn b-del" type="button"><svg class="fa " viewBox="0 0 448 512" aria-hidden="true"><path fill="currentColor" d="M432 32H312l-9.4-18.7A24 24 0 0 0 281.1 0H166.8a23.72 23.72 0 0 0-21.4 13.3L136 32H16A16 16 0 0 0 0 48v32a16 16 0 0 0 16 16h416a16 16 0 0 0 16-16V48a16 16 0 0 0-16-16zM53.2 467a48 48 0 0 0 47.9 45h245.8a48 48 0 0 0 47.9-45L416 128H32z"/></svg></button></div></div></td>
</tr>
<tr class="lo" style="height:73px">
<td class="c-num"><b class="t">7</b></td>
<td class="c-img"><div class="pic pic-smoke"><svg viewBox="0 0 30 30" width="30" height="30" aria-hidden="true"><defs><linearGradient id="sg" x1="0" x2="1"><stop offset="0" stop-color="#e4e4e4"/><stop offset=".5" stop-color="#f8f8f8"/><stop offset="1" stop-color="#e0e0e0"/></linearGradient></defs><rect x="6" y="17.800" width="17" height="6.700" rx="1.800" fill="url(#sg)"/><rect x="7" y="14.800" width="15" height="3.700" fill="#8b8b8b"/><path d="M7 15.800h15M7 16.900h15" stroke="#b5b5b5" stroke-width=".5"/><rect x="6.200" y="7.500" width="16.800" height="7.700" fill="url(#sg)"/><rect x="3" y="3.600" width="23" height="5.200" rx="2.600" fill="#f1f1f1"/><path d="M6.500 8.200h16" stroke="#d5d5d5" stroke-width=".6"/><path d="M7.500 23.800h14" stroke="#d4d4d4" stroke-width=".6"/><circle cx="15" cy="11" r="1.950" fill="#cc2b33"/><rect x="12.600" y="22.500" width="3" height="1.100" rx=".5" fill="#222"/></svg></div></td>
<td class="c-name"><a class="lnk t" href="#" style="letter-spacing:0.06px;margin-left:-0.7px">inventwo Rauchmelder</a></td>
<td class="c-ieee"><div class="ieee"><span class="t" style="letter-spacing:-0.21px;margin-left:0.6px">0x005043c903243925</span></div><div class="nwk"><abbr class="t" title="Netzwerkadresse" style="margin-left:0.4px;display:inline-block;transform-origin:0 50%;transform:scaleX(0.947)">(0x0F6D)</abbr></div></td>
<td class="c-vendor"><a class="lnk t" href="#" style="letter-spacing:0.30px;margin-left:-0.6px">Heiman</a></td>
<td class="c-model"><a class="lnk t" href="#" style="margin-left:-0.5px;display:inline-block;transform-origin:0 50%;transform:scaleX(0.918)">HS1SA</a></td>
<td class="c-lqi"><span class="t" style="letter-spacing:-0.60px;margin-left:0.4px">29</span></td>
<td class="c-seen"><span class="t" style="letter-spacing:0.05px;margin-left:0.8px">17 hours ago</span></td>
<td class="c-avail"><span class="t" style="letter-spacing:0.12px;margin-left:0.5px">Online</span></td>
<td class="c-power"><svg class="fa pw-bat" viewBox="0 0 640 512" aria-hidden="true"><path fill="currentColor" d="M544 160v64h32v64h-32v64H64V160h480m16-64H48c-26.510 0-48 21.490-48 48v224c0 26.510 21.490 48 48 48h512c26.510 0 48-21.490 48-48v-16h8c13.255 0 24-10.745 24-24V184c0-13.255-10.745-24-24-24h-8v-16c0-26.510-21.490-48-48-48zm-48 96H96v128h416V192z"/></svg></td>
<td class="c-act"><div class="acts"><button class="btn b-edit" type="button"><svg class="fa " viewBox="0 0 576 512" aria-hidden="true"><path fill="currentColor" d="M402.6 83.2l90.2 90.2c3.8 3.8 3.8 10 0 13.8L274.4 405.6l-92.8 10.3c-12.4 1.4-22.9-9.1-21.5-21.5l10.3-92.8L388.8 83.2c3.8-3.8 10-3.8 13.8 0zm162-22.9l-48.8-48.8c-15.2-15.2-39.9-15.2-55.2 0l-35.4 35.4c-3.8 3.8-3.8 10 0 13.8l90.2 90.2c3.8 3.8 10 3.8 13.8 0l35.4-35.4c15.2-15.3 15.2-40 0-55.2zM384 346.2V448H64V128h229.8c3.2 0 6.2-1.3 8.5-3.5l40-40c7.6-7.6 2.2-20.5-8.5-20.5H48C21.5 64 0 85.5 0 112v352c0 26.5 21.5 48 48 48h352c26.5 0 48-21.5 48-48V306.200c0-10.700-12.900-16-20.500-8.500l-40 40c-2.200 2.300-3.500 5.300-3.500 8.500z"/></svg></button><div class="grp"><button class="btn b-warn" type="button"><svg class="fa " viewBox="0 0 640 512" aria-hidden="true"><path fill="currentColor" d="M629.657 343.598L528.971 444.284c-9.373 9.372-24.568 9.372-33.941 0L394.343 343.598c-9.373-9.373-9.373-24.569 0-33.941l10.823-10.823c9.562-9.562 25.133-9.34 34.419.492L480 342.118V160H292.451a24.005 24.005 0 0 1-16.971-7.029l-16-16C244.361 121.851 255.069 96 276.451 96H520c13.255 0 24 10.745 24 24v222.118l40.416-42.792c9.285-9.831 24.856-10.054 34.419-.492l10.823 10.823c9.372 9.372 9.372 24.569-.001 33.941zm-265.138 15.431A23.999 23.999 0 0 0 347.548 352H160V169.881l40.416 42.792c9.286 9.831 24.856 10.054 34.419.491l10.822-10.822c9.373-9.373 9.373-24.569 0-33.941L144.971 67.716c-9.373-9.373-24.569-9.373-33.941 0L10.343 168.402c-9.373 9.373-9.373 24.569 0 33.941l10.822 10.822c9.562 9.562 25.133 9.34 34.419-.491L96 169.881V392c0 13.255 10.745 24 24 24h243.549c21.382 0 32.09-25.851 16.971-40.971l-16.001-16z"/></svg></button><button class="btn b-info" type="button"><svg class="fa " viewBox="0 0 192 512" aria-hidden="true"><path fill="currentColor" d="M20 424.229h20V279.771H20c-11.046 0-20-8.954-20-20V212c0-11.046 8.954-20 20-20h112c11.046 0 20 8.954 20 20v212.229h20c11.046 0 20 8.954 20 20V492c0 11.046-8.954 20-20 20H20c-11.046 0-20-8.954-20-20v-47.771c0-11.046 8.954-20 20-20zM96 0C56.235 0 24 32.235 24 72s32.235 72 72 72 72-32.235 72-72S135.764 0 96 0z"/></svg></button><button class="btn b-del" type="button"><svg class="fa " viewBox="0 0 448 512" aria-hidden="true"><path fill="currentColor" d="M432 32H312l-9.4-18.7A24 24 0 0 0 281.1 0H166.8a23.72 23.72 0 0 0-21.4 13.3L136 32H16A16 16 0 0 0 0 48v32a16 16 0 0 0 16 16h416a16 16 0 0 0 16-16V48a16 16 0 0 0-16-16zM53.2 467a48 48 0 0 0 47.9 45h245.8a48 48 0 0 0 47.9-45L416 128H32z"/></svg></button></div></div></td>
</tr>
<tr class="lo" style="height:74px">
<td class="c-num"><b class="t">8</b></td>
<td class="c-img"><div class="pic pic-tuya"><svg viewBox="0 0 30 30" width="30" height="30" aria-hidden="true"><path d="M8.800 16.800L16.600 2.800c.9-1.600 2.600-2.200 3.900-1.300 1.300.9 1.500 2.500.7 4l-2.400 3.300" fill="none" stroke="#d3d5d9" stroke-width=".9"/><path d="M11.400 20.600c-1.400 1.900-2.300 3.500-2.300 5 0 1.900 1.500 3.300 3.400 3.300 1.500 0 2.500-.8 3.400-2.300l5.600-9.800" fill="none" stroke="#d3d5d9" stroke-width=".9"/><rect x="-2.800" y="-7.300" width="5.600" height="14.600" rx="2.800" transform="translate(15.200 14.600) rotate(32)" fill="#f2f2f4"/><rect x="5.900" y="16.900" width="3.800" height="3.800" rx="1.300" fill="#f2f2f4"/><path d="M10.400 19.300l-1-.3" stroke="#f2f2f4" stroke-width="1.500"/><path d="M20.500 17.700l1-4.300 2.800 1.400z" fill="#f2f2f4"/></svg></div></td>
<td class="c-name"><a class="lnk t" href="#" style="letter-spacing:-0.17px;margin-left:0.3px">Wohnzimmer EG TV Stripe</a></td>
<td class="c-ieee"><div class="ieee"><span class="t" style="letter-spacing:-0.15px;margin-left:0.6px">0xa4c138efc2d9de99</span></div><div class="nwk"><abbr class="t" title="Netzwerkadresse" style="letter-spacing:-0.16px;margin-left:-0.6px">(0x3D18)</abbr></div></td>
<td class="c-vendor"><a class="lnk t" href="#" style="margin-left:0.4px;display:inline-block;transform-origin:0 50%;transform:scaleX(0.931)">Tuya</a></td>
<td class="c-model"><a class="lnk t" href="#" style="margin-left:0.5px;display:inline-block;transform-origin:0 50%;transform:scaleX(0.908)">TS0503B</a></td>
<td class="c-lqi"><span class="t" style="letter-spacing:-0.60px;margin-left:0.4px">80</span></td>
<td class="c-seen"><span class="t" style="letter-spacing:0.08px;margin-left:0.5px">9 minutes ago</span></td>
<td class="c-avail"><span class="t" style="letter-spacing:0.12px;margin-left:0.5px">Online</span></td>
<td class="c-power"><svg class="fa pw-plug" viewBox="0 0 384 512" aria-hidden="true"><path fill="currentColor" d="M320 32a32 32 0 0 0-64 0v96h64zm48 128H16a16 16 0 0 0-16 16v32a16 16 0 0 0 16 16h16v32a160.07 160.07 0 0 0 128 156.8V512h64v-99.2A160.07 160.07 0 0 0 352 256v-32h16a16 16 0 0 0 16-16v-32a16 16 0 0 0-16-16zm-240-128a32 32 0 0 0-64 0v96h64z"/></svg></td>
<td class="c-act"><div class="acts"><button class="btn b-edit" type="button"><svg class="fa " viewBox="0 0 576 512" aria-hidden="true"><path fill="currentColor" d="M402.6 83.2l90.2 90.2c3.8 3.8 3.8 10 0 13.8L274.4 405.6l-92.8 10.3c-12.4 1.4-22.9-9.1-21.5-21.5l10.3-92.8L388.8 83.2c3.8-3.8 10-3.8 13.8 0zm162-22.9l-48.8-48.8c-15.2-15.2-39.9-15.2-55.2 0l-35.4 35.4c-3.8 3.8-3.8 10 0 13.8l90.2 90.2c3.8 3.8 10 3.8 13.8 0l35.4-35.4c15.2-15.3 15.2-40 0-55.2zM384 346.2V448H64V128h229.8c3.2 0 6.2-1.3 8.5-3.5l40-40c7.6-7.6 2.2-20.5-8.5-20.5H48C21.5 64 0 85.5 0 112v352c0 26.5 21.5 48 48 48h352c26.5 0 48-21.5 48-48V306.200c0-10.700-12.900-16-20.500-8.500l-40 40c-2.200 2.300-3.500 5.300-3.500 8.500z"/></svg></button><div class="grp"><button class="btn b-warn" type="button"><svg class="fa " viewBox="0 0 640 512" aria-hidden="true"><path fill="currentColor" d="M629.657 343.598L528.971 444.284c-9.373 9.372-24.568 9.372-33.941 0L394.343 343.598c-9.373-9.373-9.373-24.569 0-33.941l10.823-10.823c9.562-9.562 25.133-9.34 34.419.492L480 342.118V160H292.451a24.005 24.005 0 0 1-16.971-7.029l-16-16C244.361 121.851 255.069 96 276.451 96H520c13.255 0 24 10.745 24 24v222.118l40.416-42.792c9.285-9.831 24.856-10.054 34.419-.492l10.823 10.823c9.372 9.372 9.372 24.569-.001 33.941zm-265.138 15.431A23.999 23.999 0 0 0 347.548 352H160V169.881l40.416 42.792c9.286 9.831 24.856 10.054 34.419.491l10.822-10.822c9.373-9.373 9.373-24.569 0-33.941L144.971 67.716c-9.373-9.373-24.569-9.373-33.941 0L10.343 168.402c-9.373 9.373-9.373 24.569 0 33.941l10.822 10.822c9.562 9.562 25.133 9.34 34.419-.491L96 169.881V392c0 13.255 10.745 24 24 24h243.549c21.382 0 32.09-25.851 16.971-40.971l-16.001-16z"/></svg></button><button class="btn b-info" type="button"><svg class="fa " viewBox="0 0 192 512" aria-hidden="true"><path fill="currentColor" d="M20 424.229h20V279.771H20c-11.046 0-20-8.954-20-20V212c0-11.046 8.954-20 20-20h112c11.046 0 20 8.954 20 20v212.229h20c11.046 0 20 8.954 20 20V492c0 11.046-8.954 20-20 20H20c-11.046 0-20-8.954-20-20v-47.771c0-11.046 8.954-20 20-20zM96 0C56.235 0 24 32.235 24 72s32.235 72 72 72 72-32.235 72-72S135.764 0 96 0z"/></svg></button><button class="btn b-del" type="button"><svg class="fa " viewBox="0 0 448 512" aria-hidden="true"><path fill="currentColor" d="M432 32H312l-9.4-18.7A24 24 0 0 0 281.1 0H166.8a23.72 23.72 0 0 0-21.4 13.3L136 32H16A16 16 0 0 0 0 48v32a16 16 0 0 0 16 16h416a16 16 0 0 0 16-16V48a16 16 0 0 0-16-16zM53.2 467a48 48 0 0 0 47.9 45h245.8a48 48 0 0 0 47.9-45L416 128H32z"/></svg></button></div></div></td>
</tr>
<tr style="height:74px">
<td class="c-num"><b class="t">9</b></td>
<td class="c-img"><div class="pic pic-tuya"><svg viewBox="0 0 30 30" width="30" height="30" aria-hidden="true"><path d="M8.800 16.800L16.600 2.800c.9-1.600 2.600-2.200 3.900-1.300 1.300.9 1.500 2.500.7 4l-2.400 3.300" fill="none" stroke="#d3d5d9" stroke-width=".9"/><path d="M11.400 20.600c-1.400 1.900-2.300 3.500-2.300 5 0 1.900 1.500 3.300 3.400 3.300 1.500 0 2.500-.8 3.400-2.300l5.600-9.800" fill="none" stroke="#d3d5d9" stroke-width=".9"/><rect x="-2.800" y="-7.300" width="5.600" height="14.600" rx="2.800" transform="translate(15.200 14.600) rotate(32)" fill="#f2f2f4"/><rect x="5.900" y="16.900" width="3.800" height="3.800" rx="1.300" fill="#f2f2f4"/><path d="M10.400 19.300l-1-.3" stroke="#f2f2f4" stroke-width="1.500"/><path d="M20.500 17.700l1-4.300 2.800 1.400z" fill="#f2f2f4"/></svg></div></td>
<td class="c-name"><a class="lnk t" href="#" style="letter-spacing:0.01px;margin-left:-0.7px">inventwo Schreibtisch Stripe</a></td>
<td class="c-ieee"><div class="ieee"><span class="t" style="letter-spacing:-0.21px;margin-left:0.6px">0xa4c1389061ea348d</span></div><div class="nwk"><abbr class="t" title="Netzwerkadresse" style="letter-spacing:-0.17px;margin-left:-0.6px">(0xA282)</abbr></div></td>
<td class="c-vendor"><a class="lnk t" href="#" style="margin-left:0.4px;display:inline-block;transform-origin:0 50%;transform:scaleX(0.931)">Tuya</a></td>
<td class="c-model"><a class="lnk t" href="#" style="margin-left:0.5px;display:inline-block;transform-origin:0 50%;transform:scaleX(0.908)">TS0503B</a></td>
<td class="c-lqi"><span class="t" style="margin-left:0.4px">7</span></td>
<td class="c-seen"><span class="t" style="letter-spacing:0.08px;margin-left:0.5px">3 minutes ago</span></td>
<td class="c-avail"><span class="t" style="letter-spacing:0.12px;margin-left:0.5px">Online</span></td>
<td class="c-power"><svg class="fa pw-plug" viewBox="0 0 384 512" aria-hidden="true"><path fill="currentColor" d="M320 32a32 32 0 0 0-64 0v96h64zm48 128H16a16 16 0 0 0-16 16v32a16 16 0 0 0 16 16h16v32a160.07 160.07 0 0 0 128 156.8V512h64v-99.2A160.07 160.07 0 0 0 352 256v-32h16a16 16 0 0 0 16-16v-32a16 16 0 0 0-16-16zm-240-128a32 32 0 0 0-64 0v96h64z"/></svg></td>
<td class="c-act"><div class="acts"><button class="btn b-edit" type="button"><svg class="fa " viewBox="0 0 576 512" aria-hidden="true"><path fill="currentColor" d="M402.6 83.2l90.2 90.2c3.8 3.8 3.8 10 0 13.8L274.4 405.6l-92.8 10.3c-12.4 1.4-22.9-9.1-21.5-21.5l10.3-92.8L388.8 83.2c3.8-3.8 10-3.8 13.8 0zm162-22.9l-48.8-48.8c-15.2-15.2-39.9-15.2-55.2 0l-35.4 35.4c-3.8 3.8-3.8 10 0 13.8l90.2 90.2c3.8 3.8 10 3.8 13.8 0l35.4-35.4c15.2-15.3 15.2-40 0-55.2zM384 346.2V448H64V128h229.8c3.2 0 6.2-1.3 8.5-3.5l40-40c7.6-7.6 2.2-20.5-8.5-20.5H48C21.5 64 0 85.5 0 112v352c0 26.5 21.5 48 48 48h352c26.5 0 48-21.5 48-48V306.200c0-10.700-12.900-16-20.500-8.500l-40 40c-2.200 2.300-3.500 5.300-3.500 8.500z"/></svg></button><div class="grp"><button class="btn b-warn" type="button"><svg class="fa " viewBox="0 0 640 512" aria-hidden="true"><path fill="currentColor" d="M629.657 343.598L528.971 444.284c-9.373 9.372-24.568 9.372-33.941 0L394.343 343.598c-9.373-9.373-9.373-24.569 0-33.941l10.823-10.823c9.562-9.562 25.133-9.34 34.419.492L480 342.118V160H292.451a24.005 24.005 0 0 1-16.971-7.029l-16-16C244.361 121.851 255.069 96 276.451 96H520c13.255 0 24 10.745 24 24v222.118l40.416-42.792c9.285-9.831 24.856-10.054 34.419-.492l10.823 10.823c9.372 9.372 9.372 24.569-.001 33.941zm-265.138 15.431A23.999 23.999 0 0 0 347.548 352H160V169.881l40.416 42.792c9.286 9.831 24.856 10.054 34.419.491l10.822-10.822c9.373-9.373 9.373-24.569 0-33.941L144.971 67.716c-9.373-9.373-24.569-9.373-33.941 0L10.343 168.402c-9.373 9.373-9.373 24.569 0 33.941l10.822 10.822c9.562 9.562 25.133 9.34 34.419-.491L96 169.881V392c0 13.255 10.745 24 24 24h243.549c21.382 0 32.09-25.851 16.971-40.971l-16.001-16z"/></svg></button><button class="btn b-info" type="button"><svg class="fa " viewBox="0 0 192 512" aria-hidden="true"><path fill="currentColor" d="M20 424.229h20V279.771H20c-11.046 0-20-8.954-20-20V212c0-11.046 8.954-20 20-20h112c11.046 0 20 8.954 20 20v212.229h20c11.046 0 20 8.954 20 20V492c0 11.046-8.954 20-20 20H20c-11.046 0-20-8.954-20-20v-47.771c0-11.046 8.954-20 20-20zM96 0C56.235 0 24 32.235 24 72s32.235 72 72 72 72-32.235 72-72S135.764 0 96 0z"/></svg></button><button class="btn b-del" type="button"><svg class="fa " viewBox="0 0 448 512" aria-hidden="true"><path fill="currentColor" d="M432 32H312l-9.4-18.7A24 24 0 0 0 281.1 0H166.8a23.72 23.72 0 0 0-21.4 13.3L136 32H16A16 16 0 0 0 0 48v32a16 16 0 0 0 16 16h416a16 16 0 0 0 16-16V48a16 16 0 0 0-16-16zM53.2 467a48 48 0 0 0 47.9 45h245.8a48 48 0 0 0 47.9-45L416 128H32z"/></svg></button></div></div></td>
</tr>
</tbody>
</table>
</main>
</body>
</html>
